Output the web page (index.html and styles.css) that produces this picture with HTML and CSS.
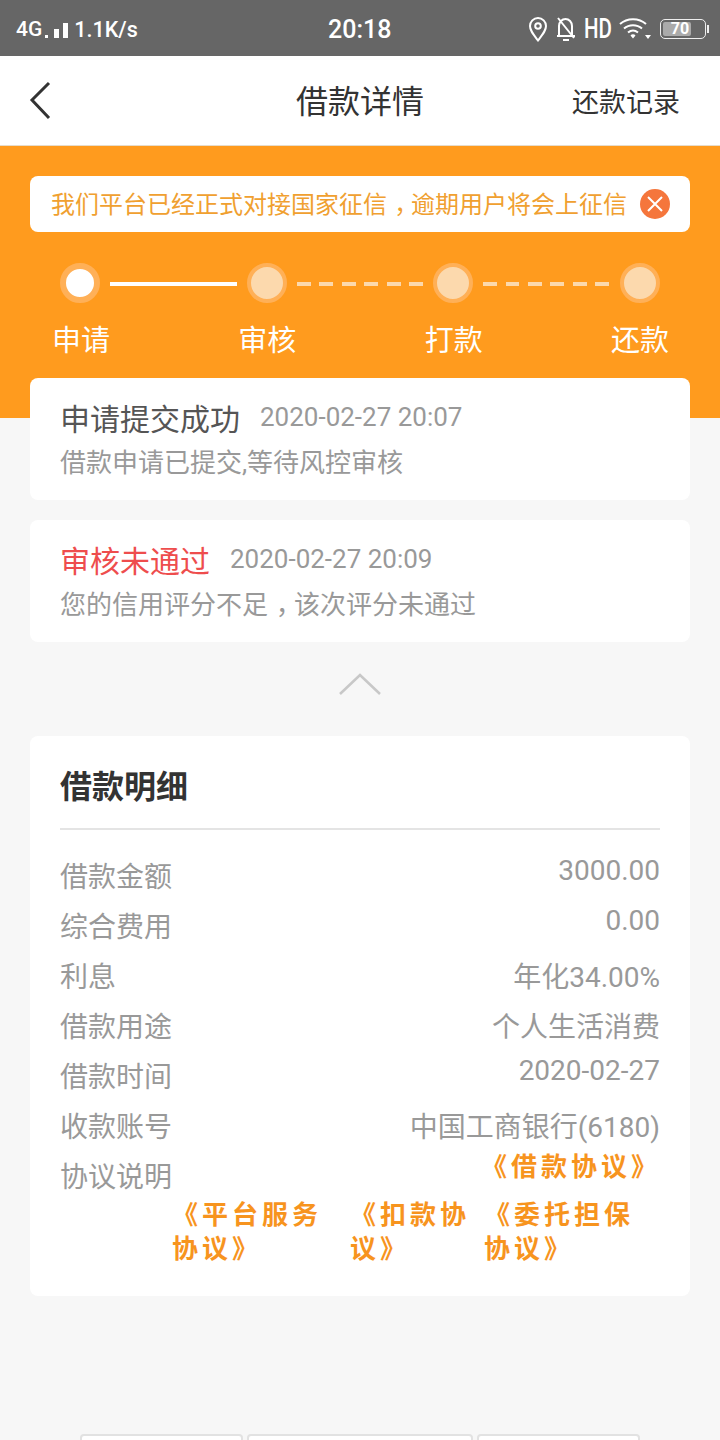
FILE: index.html
```html
<!DOCTYPE html>
<html lang="zh-CN">
<head>
    <meta charset="UTF-8">
    <meta name="viewport" content="width=device-width, initial-scale=1.0">
    <title>借款详情</title>
    <link rel="stylesheet" href="styles.css">
</head>
<body>
    <div class="status-bar">
        <div class="status-left">
            <span class="net">4G</span>
            <svg class="signal" width="27" height="20" viewBox="0 0 27 20"><path fill="#fff" d="M2 16h3v3H2zM11 10h5v9h-5zM20 4h5v15h-5z"/></svg>
            <span class="speed">1.1K/s</span>
        </div>
        <div class="status-time">20:18</div>
        <div class="status-right">
            <svg width="20" height="26" viewBox="0 0 20 26" fill="none" stroke="#fff" stroke-width="2"><path d="M10 24.500C5 18 2 14.500 2 10a8 8 0 0 1 16 0c0 4.500-3 8-8 14.500z"/><circle cx="10" cy="10" r="2.800"/></svg>
            <svg width="22" height="26" viewBox="0 0 22 26" fill="none" stroke="#fff" stroke-width="2"><path d="M4 19V10c0-4 3-7 6.500-7S17 6 17 10v9M2 20h18M8 24h6M3 2l16 20"/></svg>
            <span class="hd">HD</span>
            <svg width="32" height="24" viewBox="0 0 32 24" fill="none" stroke="#fff" stroke-width="2"><path d="M1 7c7-6.500 19-6.500 26 0M5 11.500c5-4.500 13-4.500 18 0M9 15.500c3-2.500 7-2.500 10 0"/><path fill="#fff" stroke="none" d="M11.500 18.500a3 3 0 0 1 5 0L14 21.500zM26 18h6l-3 4z"/></svg>
            <div class="battery"><div class="battery-level">70</div></div>
        </div>
    </div>

    <div class="header">
        <svg class="back" width="24" height="40" viewBox="0 0 24 40" fill="none" stroke="#333" stroke-width="3"><path d="M20 2L3 19l17 18"/></svg>
        <h1>借款详情</h1>
        <span class="records">还款记录</span>
    </div>

    <div class="banner">
        <div class="notice">
            <span class="notice-text">我们平台已经正式对接国家征信<span class="comma">，</span>逾期用户将会上征信</span>
            <span class="notice-close">
                <svg width="18" height="18" viewBox="0 0 18 18" stroke="#fff" stroke-width="2"><path d="M2 2l14 14M16 2L2 16"/></svg>
            </span>
        </div>
        <div class="steps">
            <div class="dot dot-on"></div>
            <div class="line"></div>
            <div class="dot"></div>
            <div class="line line-dash"></div>
            <div class="dot"></div>
            <div class="line line-dash"></div>
            <div class="dot"></div>
        </div>
        <div class="step-labels">
            <span>申请</span>
            <span>审核</span>
            <span>打款</span>
            <span>还款</span>
        </div>
    </div>

    <div class="content">
        <div class="card progress-card">
            <div class="progress-head">
                <span class="progress-title">申请提交成功</span>
                <span class="progress-time">2020-02-27 20:07</span>
            </div>
            <div class="progress-desc">借款申请已提交,等待风控审核</div>
        </div>
        <div class="card progress-card">
            <div class="progress-head">
                <span class="progress-title failed">审核未通过</span>
                <span class="progress-time">2020-02-27 20:09</span>
            </div>
            <div class="progress-desc">您的信用评分不足<span class="comma">，</span>该次评分未通过</div>
        </div>

        <div class="collapse">
            <svg width="42" height="24" viewBox="0 0 42 24" fill="none" stroke="#c8c8c8" stroke-width="2.500"><path d="M1 22L21 3l20 19"/></svg>
        </div>

        <div class="card detail-card">
            <h2>借款明细</h2>
            <div class="row"><span>借款金额</span><span class="value num">3000.00</span></div>
            <div class="row"><span>综合费用</span><span class="value num">0.00</span></div>
            <div class="row"><span>利息</span><span class="value">年化34.00%</span></div>
            <div class="row"><span>借款用途</span><span class="value">个人生活消费</span></div>
            <div class="row"><span>借款时间</span><span class="value num">2020-02-27</span></div>
            <div class="row"><span>收款账号</span><span class="value">中国工商银行(6180)</span></div>
            <div class="row row-link"><span>协议说明</span><a class="link first-link">《借款协议》</a></div>
            <div class="links">
                <a class="link">《平台服务协议》</a>
                <a class="link">《扣款协议》</a>
                <a class="link">《委托担保协议》</a>
            </div>
        </div>
    </div>

    <div class="bottom-boxes">
        <div class="box box-a"></div>
        <div class="box box-b"></div>
        <div class="box box-c"></div>
    </div>
</body>
</html>
```

FILE: styles.css
```css
* {
    box-sizing: border-box;
}

body {
    margin: 0;
    height: 1440px;
    overflow: hidden;
    background-color: #f7f7f7;
    font-family: Roboto, 'Noto Sans CJK SC', sans-serif;
}

/* the screenshot's font centres the full width comma */
.comma {
    padding-left: 0.3em;
    letter-spacing: -0.3em;
}

/* status bar */
.status-bar {
    height: 56px;
    background-color: #666;
    color: #fff;
    display: flex;
    align-items: center;
    justify-content: space-between;
    padding: 2px 14px 0 16px;
    position: relative;
}

.status-left {
    display: flex;
    align-items: center;
    font-size: 21px;
    font-weight: 500;
}

.signal {
    margin: 0 0 0 1px;
}

.speed {
    margin-left: 4px;
    font-size: 21.500px;
}

.status-time {
    font-size: 25px;
    font-weight: 500;
    position: absolute;
    left: 328px;
    top: 15px;
}

.status-right {
    display: flex;
    align-items: center;
    gap: 7px;
}

.hd {
    width: 28px;
    font-size: 27px;
    font-weight: 500;
    transform: scaleX(0.76);
    transform-origin: left;
}

.battery {
    width: 46px;
    height: 20px;
    border: 1px solid #eee;
    border-radius: 5px;
    margin-left: 2px;
    padding: 2px;
    position: relative;
}

.battery::after {
    content: "";
    position: absolute;
    right: -4px;
    top: 5px;
    width: 2px;
    height: 8px;
    background-color: #eee;
}

.battery-level {
    width: 70%;
    height: 100%;
    background-color: #aaa;
    border-radius: 2px;
    color: #fff;
    font-size: 16px;
    font-weight: 700;
    line-height: 14px;
    text-align: center;
    padding-left: 6px;
}

/* header */
.header {
    height: 90px;
    background-color: #fff;
    border-bottom: 1px solid #e6dccb;
    display: flex;
    align-items: center;
    justify-content: space-between;
    padding: 0 40px 0 29px;
    position: relative;
}

.header h1 {
    margin: 0;
    font-size: 32px;
    font-weight: 400;
    color: #333;
    position: absolute;
    left: 296px;
    top: 23px;
    line-height: 46px;
}

.records {
    font-size: 27px;
    color: #333;
}

/* orange part */
.banner {
    height: 272px;
    background-color: #ff9b1e;
    padding: 30px 30px 0;
}

.notice {
    height: 56px;
    background-color: #fff;
    border-radius: 8px;
    display: flex;
    align-items: center;
    justify-content: space-between;
    padding: 0 20px 0 21px;
    font-size: 24px;
    color: #f0a030;
}

.notice-text {
    margin-bottom: 4px;
}

.notice-close {
    width: 30px;
    height: 30px;
    border-radius: 50%;
    background-color: #f5763c;
    display: flex;
    align-items: center;
    justify-content: center;
}

.steps {
    display: flex;
    align-items: center;
    margin: 31px 30px 0;
}

.dot {
    width: 40px;
    height: 40px;
    border-radius: 50%;
    background-color: #fcd9ad;
    border: 4px solid #ffb057;
    flex: none;
}

.dot-on {
    background-color: #fff;
    border: 6px solid #ffb057;
}

.line {
    flex: 1;
    height: 4px;
    margin: 1px 10px 0;
    background-color: #fff;
}

.line-dash {
    background: repeating-linear-gradient(to right, #fcd9ad 0 14px, transparent 14px 22.500px);
}

.step-labels {
    display: flex;
    justify-content: space-between;
    margin: 18px 21px 0 22px;
    font-size: 29px;
    line-height: 40px;
    color: #fff;
}

/* cards */
.content {
    padding: 0 30px;
    margin-top: -40px;
    position: relative;
}

.card {
    background-color: #fff;
    border-radius: 8px;
}

.progress-card {
    height: 122px;
    margin-bottom: 20px;
    padding: 20px 30px 0;
}

.progress-head {
    display: flex;
    align-items: center;
    height: 44px;
    line-height: 44px;
}

.progress-title {
    font-size: 30px;
    color: #555;
    margin-right: 20px;
}

.progress-title.failed {
    color: #ee4d4d;
}

.progress-time {
    font-size: 26px;
    color: #999;
    margin-bottom: 6px;
}

.progress-desc {
    margin-top: 1px;
    font-size: 26px;
    line-height: 40px;
    color: #999;
}

.collapse {
    height: 74px;
    padding-top: 10px;
    text-align: center;
}

.detail-card {
    height: 560px;
    padding: 28px 30px 0;
}

.detail-card h2 {
    margin: 0 0 20px;
    height: 66px;
    border-bottom: 2px solid #e4e4e4;
    font-size: 32px;
    font-weight: 700;
    line-height: 46px;
    color: #333;
}

.row {
    display: flex;
    justify-content: space-between;
    align-items: center;
    height: 50px;
    font-size: 28px;
    color: #999;
}

.value.num {
    padding-bottom: 10px;
}

.row-link {
    align-items: flex-start;
}

.row-link span {
    line-height: 56px;
}

.link {
    font-size: 26px;
    font-weight: 700;
    letter-spacing: 4px;
    line-height: 34px;
    color: #f7941e;
}

.first-link {
    margin-right: -1px;
}

.links {
    display: grid;
    grid-template-columns: 164px 120px 156px;
    column-gap: 14px;
    margin: -2px 0 0 112px;
}

/* buttons cut off by the bottom of the screen */
.bottom-boxes {
    display: flex;
    gap: 4px;
    margin: 138px 80px 0;
}

.box {
    height: 20px;
    background-color: #fff;
    border: 2px solid #e2e2e2;
    border-radius: 4px;
}

.box-a {
    width: 163px;
}

.box-b {
    width: 226px;
}

.box-c {
    width: 163px;
}
```
